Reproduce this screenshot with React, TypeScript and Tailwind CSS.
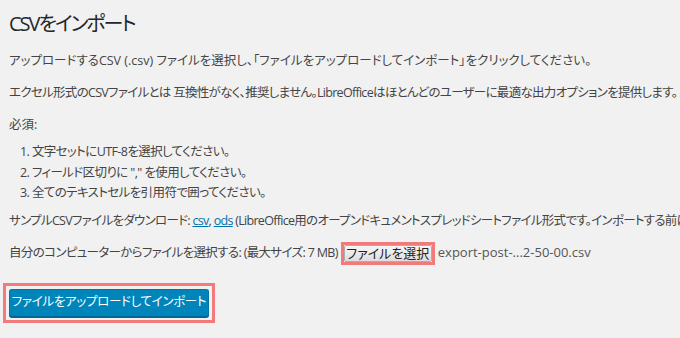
import React from 'react'

const font = '"Open Sans", "Noto Sans CJK JP", sans-serif'

export default function App() {
  return (
    <div
      className="w-[680px] h-[338px] overflow-hidden bg-[#f1f1f1] text-[#444] text-[12.5px] pl-[9px] pt-[9px] [font-feature-settings:'palt']"
      style={{ fontFamily: font }}
    >
      <h1 className="text-[20px] leading-[30px] tracking-[-2px] text-[#23282d] font-normal">CSVをインポート</h1>

      <p className="mt-[12px] leading-[19px] whitespace-nowrap">
        アップロードするCSV (.csv) ファイルを選択し、「ファイルをアップロードしてインポート」をクリックしてください。
      </p>
      <p className="mt-[13px] leading-[19px] whitespace-nowrap tracking-[-0.7px]">
        エクセル形式のCSVファイルとは 互換性がなく、推奨しません。LibreOfficeはほとんどのユーザーに最適な出力オプションを提供します。
      </p>
      <p className="mt-[13px] leading-[19px]">必須:</p>

      <ol className="mt-[8px] pl-[11px] leading-[20.5px] tracking-[-0.6px]">
        <li>1. 文字セットにUTF-8を選択してください。</li>
        <li>2. フィールド区切りに &quot;,&quot; を使用してください。</li>
        <li>3. 全てのテキストセルを引用符で囲ってください。</li>
      </ol>

      <p className="mt-[7px] leading-[19px] whitespace-nowrap tracking-[-0.7px]">
        サンプルCSVファイルをダウンロード: <a href="#" className="text-[#0073aa] underline">csv</a>,{' '}
        <a href="#" className="text-[#0073aa] underline">ods</a> (LibreOffice用のオープンドキュメントスプレッドシートファイル形式です。インポートする前にCSVとして保存してください)
      </p>

      <div className="mt-[12px] flex items-center whitespace-nowrap">
        <span className="tracking-[-0.65px]">自分のコンピューターからファイルを選択する: (最大サイズ: 7 MB)</span>
        <span className="ml-[3px] border-[3px] border-[#f27a7a] flex">
          <button className="h-[17px] w-[88px] text-[13px] leading-none text-[#222] border border-[#adadad] rounded-[2px] bg-gradient-to-b from-[#f6f6f6] to-[#dedede]">
            ファイルを選択
          </button>
        </span>
        <span className="ml-[3px] text-[#555] text-[13px]">export-post-...2-50-00.csv</span>
      </div>

      <div className="mt-[18px] ml-[-6px] inline-flex border-[3px] border-[#f27a7a] p-[3px]">
        <button className="w-[200px] h-[28px] whitespace-nowrap tracking-[-0.3px] rounded-[3px] bg-[#0085ba] border border-[#0073aa] border-b-[#006799] shadow-[0_1px_0_#006799] text-white text-[12.5px]">
          ファイルをアップロードしてインポート
        </button>
      </div>
    </div>
  )
}
